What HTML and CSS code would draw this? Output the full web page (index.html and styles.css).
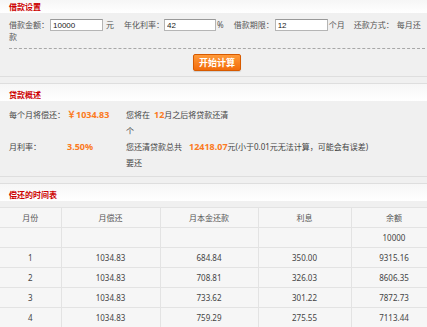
FILE: index.html
```html
<!DOCTYPE html>
<html lang="zh-CN">
<head>
    <meta charset="UTF-8">
    <meta name="viewport" content="width=device-width, initial-scale=1.0">
    <title>贷款计算器</title>
    <link rel="stylesheet" href="styles.css">
</head>
<body>
    <div class="page">
        <!-- 借款设置 -->
        <div class="panel panel-first">
            <div class="panel-head panel-head-top">借款设置</div>
            <div class="panel-body settings">
                <p class="form-line"><span class="label">借款金额：</span><input class="field field-a" type="text" value="10000"><span class="unit unit-yuan">元</span><span class="label">年化利率：</span><input class="field field-b" type="text" value="42"><span class="unit unit-pct">%</span><span class="label">借款期限：</span><input class="field field-c" type="text" value="12"><span class="unit unit-month">个月</span><span class="label">还款方式：</span><span class="mode">每月还款</span></p>
                <div class="actions">
                    <button class="btn-calc" id="calcBtn">开始计算</button>
                </div>
            </div>
        </div>

        <!-- 贷款概述 -->
        <div class="panel">
            <div class="panel-head">贷款概述</div>
            <div class="panel-body summary">
                <div class="sum-row">
                    <div class="sum-label">每个月将偿还：</div>
                    <div class="sum-value">￥1034.83</div>
                    <div class="sum-text sum-text-short">您将在<span class="hl hl-month">12</span>月之后将贷款还清个</div>
                </div>
                <div class="sum-row">
                    <div class="sum-label">月利率：</div>
                    <div class="sum-value">3.50%</div>
                    <div class="sum-text sum-text-long">您还清贷款总共<span class="hl hl-total">12418.07</span>元(小于0.01元无法计算，可能会有误差)要还</div>
                </div>
            </div>
        </div>

        <!-- 偿还的时间表 -->
        <div class="panel">
            <div class="panel-head">偿还的时间表</div>
            <div class="panel-body schedule">
                <table class="plan">
                    <colgroup>
                        <col style="width: 61px">
                        <col style="width: 99px">
                        <col style="width: 98px">
                        <col style="width: 93px">
                        <col style="width: 86px">
                    </colgroup>
                    <thead>
                        <tr>
                            <th>月份</th>
                            <th>月偿还</th>
                            <th>月本金还款</th>
                            <th>利息</th>
                            <th>余额</th>
                        </tr>
                    </thead>
                    <tbody>
                        <tr><td></td><td></td><td></td><td></td><td>10000</td></tr>
                        <tr><td>1</td><td>1034.83</td><td>684.84</td><td>350.00</td><td>9315.16</td></tr>
                        <tr><td>2</td><td>1034.83</td><td>708.81</td><td>326.03</td><td>8606.35</td></tr>
                        <tr><td>3</td><td>1034.83</td><td>733.62</td><td>301.22</td><td>7872.73</td></tr>
                        <tr><td>4</td><td>1034.83</td><td>759.29</td><td>275.55</td><td>7113.44</td></tr>
                    </tbody>
                </table>
            </div>
        </div>
    </div>
</body>
</html>
```

FILE: styles.css
```css
* {
    margin: 0;
    padding: 0;
    box-sizing: border-box;
}

html,
body {
    overflow: hidden;
}

body {
    background: #f0f0f0;
    font-family: 'Noto Sans', 'Noto Sans CJK SC', sans-serif;
    font-size: 8px;
    line-height: 12px;
    color: #555;
}

.page {
    width: 427px;
}

.panel {
    background: #f0f0f0;
    border-top: 1px solid #dedede;
    border-bottom: 1px solid #dedede;
    margin-bottom: 6px;
}

.panel-first {
    border-top: none;
}

.panel-head {
    height: 17px;
    padding: 6px 0 0 9px;
    background: linear-gradient(#f6f6f6, #ffffff);
    color: #cc0000;
    font-weight: bold;
    line-height: 10px;
}

.panel-head-top {
    height: 13px;
    padding-top: 2px;
}

/* 借款设置 */
.settings {
    padding: 6px 2px 0 9px;
}

.form-line {
    line-height: 12px;
    padding-bottom: 5px;
    border-bottom: 1px dashed #a8a8a8;
}

.field {
    height: 12px;
    margin-left: 1px;
    padding: 0 2px;
    border: 1px solid #b5b5b5;
    border-top-color: #999;
    background: #fff;
    font-family: 'Liberation Sans', sans-serif;
    font-size: 8px;
    color: #222;
    vertical-align: top;
    outline: none;
}

.field-a {
    width: 53px;
}

.field-b {
    width: 52px;
    margin-left: 0;
}

.field-c {
    width: 53px;
}

.unit-yuan {
    margin: 0 10px 0 3px;
}

.unit-pct {
    margin: 0 10px 0 1px;
}

.unit-month {
    margin: 0 9px 0 1px;
}

.mode {
    margin-left: 3px;
}

.actions {
    padding: 5px 0 5px;
    text-align: center;
}

.btn-calc {
    height: 17px;
    padding: 0 5px;
    border: 1px solid #d75a00;
    border-radius: 2px;
    background: linear-gradient(#ff9a3a, #f26c0c);
    box-shadow: 0 1px 1px rgba(0, 0, 0, 0.15);
    color: #fff;
    font-family: 'Noto Sans CJK SC', sans-serif;
    font-size: 9px;
    font-weight: bold;
    line-height: 15px;
    cursor: pointer;
}

/* 贷款概述 */
.summary {
    padding: 6px 0 5px 9px;
    line-height: 16px;
    color: #444;
}

.sum-row {
    display: flex;
    align-items: flex-start;
}

.sum-label {
    width: 58px;
    flex: none;
}

.sum-value {
    width: 59px;
    flex: none;
    color: #fb7a22;
    font-size: 9px;
    font-weight: bold;
}

.hl {
    color: #fb7a22;
    font-size: 9px;
    font-weight: bold;
}

.hl-month {
    margin-left: 4px;
}

.hl-total {
    margin-left: 7px;
}

.sum-text {
    flex: none;
    word-break: break-all;
}

.sum-text-short {
    width: 106px;
}

.sum-text-long {
    width: 250px;
}

/* 偿还的时间表 */
.schedule {
    padding-top: 6px;
}

.plan {
    width: 437px;
    table-layout: fixed;
    border-collapse: collapse;
    background: #f6f6f6;
    color: #444;
}

.plan th,
.plan td {
    height: 20px;
    border: 1px solid #e3e3e3;
    text-align: center;
    font-weight: normal;
    line-height: 12px;
    padding: 0;
}

.plan th {
    color: #555;
}

.plan th:first-child,
.plan td:first-child {
    border-left: none;
}
```
